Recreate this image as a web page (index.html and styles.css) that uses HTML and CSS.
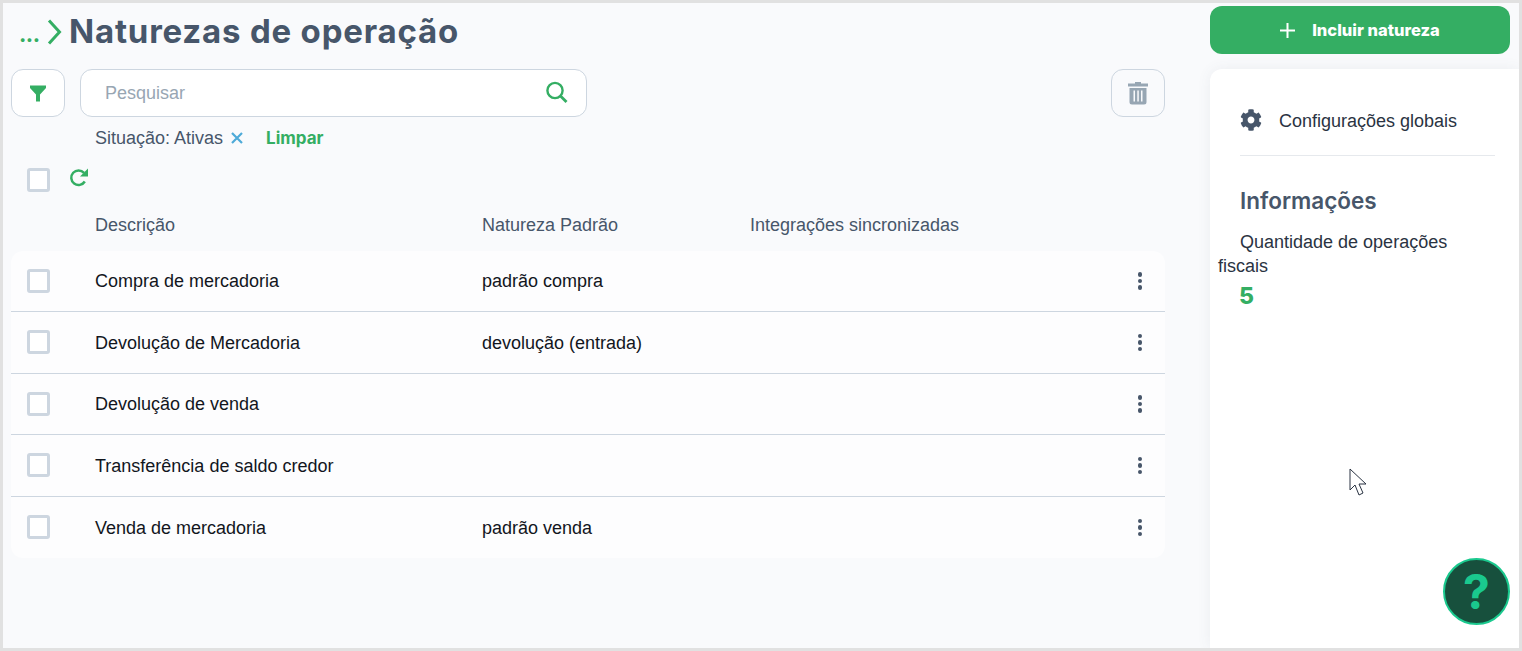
FILE: index.html
```html
<!DOCTYPE html>
<html lang="pt-BR">
<head>
<meta charset="utf-8">
<title>Naturezas de operação</title>
<link rel="stylesheet" href="styles.css">
</head>
<body>
<div class="frame">
  <main class="main">
    <header class="heading">
      <span class="crumb-dots">...</span>
      <svg class="crumb-arrow" width="16" height="26" viewBox="0 0 16 26"><path d="M2 1.500 12.500 13 2 24.500" fill="none" stroke="#34ae63" stroke-width="3"/></svg>
      <h1 class="title">Naturezas de operação</h1>
    </header>
    <div class="toolbar">
      <button class="icon-btn" aria-label="Filtrar">
        <svg width="18" height="17" viewBox="0 0 18 17"><path d="M1 0.500h16v2.500L11 9.500v7h-4v-7L1 3z" fill="#34ae63"/></svg>
      </button>
      <div class="search">
        <span class="search-text">Pesquisar</span>
        <svg width="24" height="24" viewBox="0 0 24 24"><circle cx="10" cy="9.500" r="7.600" fill="none" stroke="#34ae63" stroke-width="2.400"/><path d="M15.500 15l6 6" stroke="#34ae63" stroke-width="2.800" fill="none"/></svg>
      </div>
      <button class="icon-btn trash" aria-label="Excluir">
        <svg width="20" height="24" viewBox="0 0 20 24"><path d="M0 2.500h7V1h6v1.500h7v2.900H0z" fill="#97a6b3"/><path fill-rule="evenodd" d="M1.500 7h17v14a2.500 2.500 0 0 1-2.500 2.500H4A2.500 2.500 0 0 1 1.500 21zM5.500 9.500v11h1.500v-11zM9.300 9.500v11h1.500v-11zM13 9.500v11h1.500v-11z" fill="#97a6b3"/></svg>
      </button>
    </div>
    <div class="chips">
      <span class="chip">Situação: Ativas</span>
      <svg class="chip-x" width="12" height="12" viewBox="0 0 12 12"><path d="M1 1l10 10M11 1 1 11" stroke="#4eaad8" stroke-width="2.200"/></svg>
      <span class="clear">Limpar</span>
    </div>
    <div class="bulk">
      <span class="check"></span>
      <svg class="refresh" width="20" height="20" viewBox="0 0 20 20"><path d="M15.800 13.500A7.300 7.300 0 1 1 15 4.800" fill="none" stroke="#34ae63" stroke-width="2.500"/><path d="M19 0.500V8.500H11z" fill="#34ae63"/></svg>
    </div>
    <div class="row-grid head">
      <span></span><span>Descrição</span><span>Natureza Padrão</span><span>Integrações sincronizadas</span><span></span>
    </div>
    <section class="table">
      <div class="row-grid row"><span class="check"></span><span>Compra de mercadoria</span><span>padrão compra</span><span></span><span class="dots"><i></i><i></i><i></i></span></div>
      <div class="row-grid row"><span class="check"></span><span>Devolução de Mercadoria</span><span>devolução (entrada)</span><span></span><span class="dots"><i></i><i></i><i></i></span></div>
      <div class="row-grid row"><span class="check"></span><span>Devolução de venda</span><span></span><span></span><span class="dots"><i></i><i></i><i></i></span></div>
      <div class="row-grid row"><span class="check"></span><span>Transferência de saldo credor</span><span></span><span></span><span class="dots"><i></i><i></i><i></i></span></div>
      <div class="row-grid row"><span class="check"></span><span>Venda de mercadoria</span><span>padrão venda</span><span></span><span class="dots"><i></i><i></i><i></i></span></div>
    </section>
  </main>
  <aside class="side">
    <button class="primary">
      <svg width="15" height="15" viewBox="0 0 15 15"><path d="M7.500 0v15M0 7.500h15" stroke="#fff" stroke-width="2"/></svg>
      <span>Incluir natureza</span>
    </button>
    <div class="panel">
      <div class="config">
        <svg width="22" height="22" viewBox="0 0 512 512"><path fill="#47566a" d="M487.400 315.700l-42.600-24.600c4.300-23.200 4.300-47 0-70.200l42.600-24.600c4.900-2.800 7.100-8.600 5.500-14-11.100-35.600-30-67.800-54.700-94.600-3.800-4.100-10-5.100-14.800-2.300L380.800 110c-17.900-15.400-38.500-27.300-60.800-35.100V25.800c0-5.600-3.900-10.500-9.400-11.700-36.700-8.200-74.300-7.800-109.200 0-5.500 1.200-9.400 6.100-9.400 11.700V75c-22.200 7.900-42.800 19.800-60.800 35.100L88.700 85.500c-4.900-2.800-11-1.900-14.800 2.300-24.700 26.700-43.600 58.900-54.700 94.600-1.700 5.400.6 11.200 5.500 14L67.300 221c-4.300 23.200-4.300 47 0 70.200l-42.600 24.600c-4.900 2.800-7.100 8.600-5.500 14 11.100 35.600 30 67.800 54.700 94.600 3.800 4.100 10 5.100 14.800 2.300l42.600-24.600c17.900 15.400 38.500 27.300 60.800 35.100v49.200c0 5.600 3.900 10.500 9.400 11.700 36.700 8.200 74.300 7.800 109.200 0 5.500-1.200 9.400-6.100 9.400-11.700v-49.200c22.200-7.900 42.800-19.800 60.800-35.100l42.600 24.600c4.900 2.800 11 1.900 14.800-2.300 24.700-26.700 43.600-58.900 54.700-94.600 1.500-5.500-.7-11.300-5.600-14.100zM256 336c-44.100 0-80-35.900-80-80s35.900-80 80-80 80 35.900 80 80-35.900 80-80 80z"/></svg>
        <span>Configurações globais</span>
      </div>
      <h2 class="info-title">Informações</h2>
      <p class="info-text">Quantidade de operações fiscais</p>
      <div class="info-value">5</div>
    </div>
    <svg class="cursor" width="20" height="29" viewBox="0 0 20 29"><path d="M1 1v21l5-5 4 10 4-2-4-9h7z" fill="#fff" stroke="#2a3342" stroke-width="1"/></svg>
    <button class="help" aria-label="Ajuda">?</button>
  </aside>
</div>
</body>
</html>
```
FILE: styles.css
```css
* { box-sizing: border-box; }
html, body { margin: 0; height: 100%; }
body { font-family: "Liberation Sans", Arial, sans-serif; font-size: 18px; color: #1c2430; }
button { font: inherit; cursor: pointer; }

.frame {
  height: 651px;
  border: 3px solid #e1e1e1;
  background: #f9fafc;
  display: flex;
  overflow: hidden;
  position: relative;
}

.main { width: 1207px; flex: none; padding: 0 0 0 8px; }

.heading { height: 66px; display: flex; align-items: center; padding: 0 0 10px 8px; }
.crumb-dots { font-family: Inter, sans-serif; font-weight: 700; font-size: 22px; color: #34ae63; width: 28px; letter-spacing: -0.5px; padding-top: 5px; }
.crumb-arrow { flex: none; margin-right: 6px; margin-top: 2px; }
.title { margin: 0; font-family: Inter, sans-serif; font-weight: 700; font-size: 33px; letter-spacing: 0.800px; color: #47566a; }

.toolbar { display: flex; align-items: stretch; height: 48px; width: 1154px; }
.icon-btn { width: 54px; flex: none; background: #fff; border: 1px solid #cdd6e0; border-radius: 12px; display: flex; align-items: center; justify-content: center; padding: 0; }
.trash { margin-left: auto; background: #f9fafc; }
.search { width: 507px; margin-left: 15px; background: #fff; border: 1px solid #cdd6e0; border-radius: 12px; display: flex; align-items: center; justify-content: space-between; padding: 0 17px 0 24px; }
.search-text { color: #98a6b3; }

.chips { height: 42px; display: flex; align-items: center; padding-left: 84px; color: #47566a; }
.chip-x { margin-left: 8px; }
.clear { margin-left: 23px; font-family: Inter, sans-serif; font-weight: 700; color: #34ae63; font-size: 17px; }

.bulk { height: 46px; display: flex; align-items: flex-start; padding: 9px 0 0 16px; gap: 19px; }

.check { display: block; width: 23px; height: 24px; background: #fff; border: 3px solid #cdd6e0; border-radius: 3px; }

.row-grid { display: grid; grid-template-columns: 68px 387px 268px 1fr 30px; align-items: center; padding-left: 16px; width: 1154px; }
.head { height: 45.500px; color: #47566a; padding-bottom: 4px; }

.table { width: 1154px; background: #fdfdfe; border-radius: 12px; overflow: hidden; }
.row { height: 61.500px; color: #12161d; border-bottom: 1px solid #cdd6e0; }
.row > span:not(.check):not(.dots) { padding-top: 2px; }
.row:last-child { border-bottom: 0; }

.dots { display: flex; flex-direction: column; gap: 2px; align-items: center; width: 6px; margin-left: 2px; }
.dots i { width: 4.500px; height: 4.500px; background: #47566a; border-radius: 50%; display: block; }

.side { flex: 1; display: flex; flex-direction: column; padding-top: 3px; min-width: 0; }
.primary { width: 300px; height: 48px; flex: none; border: 0; border-radius: 12px; background: #34ae63; color: #fff; display: flex; align-items: center; justify-content: center; gap: 17px; font-family: Inter, sans-serif; font-weight: 800; font-size: 16.500px; padding: 0; }
.panel { flex: 1; margin-top: 15px; background: #fff; border-radius: 12px 0 0 0; box-shadow: 0 0 14px rgba(71, 86, 106, 0.08); padding: 0 24px 0 8px; }
.config { margin: 0 0 0 22px; height: 87px; display: flex; align-items: center; gap: 17px; padding-top: 16px; border-bottom: 1px solid #e6e9ed; color: #2a3342; }
.config span { padding-top: 2px; }
.config svg { flex: none; }
.info-title { margin: 30px 0 0 22px; font-family: Inter, sans-serif; font-weight: 600; font-size: 22.500px; line-height: 30px; color: #47566a; }
.info-text { margin: 14px 0 0; text-indent: 22px; line-height: 24px; color: #2a3342; }
.info-value { margin: 3px 0 0 21px; font-family: Inter, sans-serif; font-weight: 800; font-size: 23px; line-height: 30px; color: #34ae63; }

.cursor { position: absolute; left: 1346px; top: 465px; }
.help { position: absolute; left: 1440px; top: 555px; width: 67px; height: 67px; border-radius: 50%; background: #17503d; border: 2px solid #1ac98e; color: #1ac98e; font-family: Inter, sans-serif; font-weight: 700; font-size: 48px; line-height: 1; padding: 0; }
```
